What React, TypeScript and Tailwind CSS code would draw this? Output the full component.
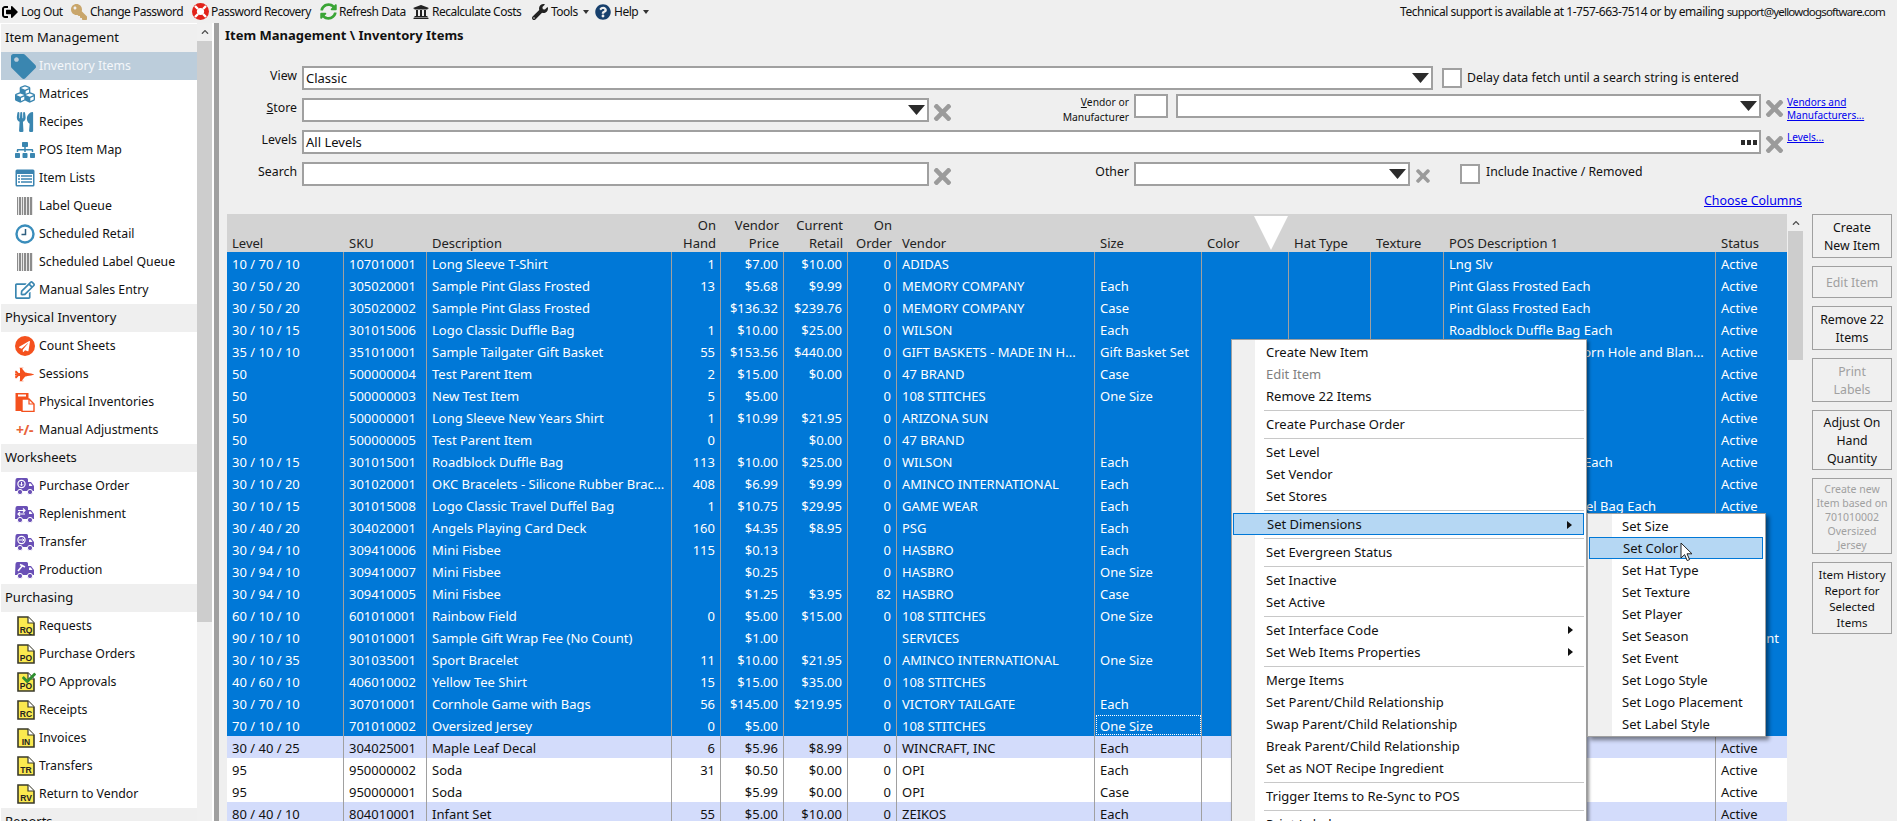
import type { ReactNode } from "react";
import {
  FaSignOutAlt,
  FaKey,
  FaSyncAlt,
  FaUniversity,
  FaWrench,
  FaQuestionCircle,
  FaTag,
  FaCubes,
  FaUtensils,
  FaSitemap,
  FaRegEdit,
  FaPaperPlane,
  FaFighterJet,
  FaTimes,
  FaCheck,
  FaChevronUp,
} from "react-icons/fa";

function LifeRing() {
  return (
    <svg width="17" height="17" viewBox="0 0 17 17">
      <circle cx="8.5" cy="8.5" r="8.5" fill="#e2231a" />
      <path d="M3 3l3 3M14 3l-3 3M3 14l3-3M14 14l-3-3" stroke="#fff" strokeWidth="2.4" />
      <circle cx="8.5" cy="8.5" r="3.6" fill="#fff" />
    </svg>
  );
}

function Barcode() {
  const bars = [0, 2, 3, 5, 7, 8, 10, 11, 13, 14];
  return (
    <svg width="16" height="20" viewBox="0 0 16 20" className="ml-[1px]">
      {bars.map((x) => (
        <rect key={x} x={x} y="1" width="1.2" height="18" fill="#8c8c8c" />
      ))}
    </svg>
  );
}

function Clock() {
  return (
    <svg width="20" height="20" viewBox="0 0 20 20">
      <circle cx="10" cy="10" r="8.5" fill="#fff" stroke="#3a8dbb" strokeWidth="2.4" />
      <path d="M10.5 5v5.5H6.5" fill="none" stroke="#2f5f7f" strokeWidth="1.5" />
    </svg>
  );
}

function ListWindow() {
  return (
    <svg width="20" height="18" viewBox="0 0 20 18">
      <rect x="0.5" y="0.5" width="19" height="17" rx="1.5" fill="#3b84b1" />
      <rect x="2" y="5" width="16" height="11" fill="#fff" />
      <path d="M3 7h2M6 7h11M3 10h2M6 10h11M3 13h2M6 13h11" stroke="#3b84b1" strokeWidth="1.6" />
    </svg>
  );
}

function Sheets() {
  return (
    <svg width="20" height="20" viewBox="0 0 20 20">
      <path d="M0.5 1h13v18h-13z" fill="#f4511e" />
      <path d="M3 2.5h8v2H3z" fill="#fff" />
      <path d="M7 7h7l5 5v7.5H7z" fill="#fff" stroke="#f4511e" strokeWidth="1.4" />
      <path d="M14 7v5h5" fill="none" stroke="#f4511e" strokeWidth="1.2" />
    </svg>
  );
}

function Truck({ children }: { children?: ReactNode }) {
  return (
    <svg width="20" height="20" viewBox="0 0 20 20">
      <path d="M0.5 4a2 2 0 0 1 2-2h9a1.5 1.5 0 0 1 1.5 1.5V6h3l3 4v5h-19z" fill="#6a50b6" />
      <path d="M14 7.5h1.8l1.7 2.5H14z" fill="#fff" />
      <circle cx="5" cy="16" r="2.6" fill="#6a50b6" stroke="#fff" strokeWidth="1" />
      <circle cx="15" cy="16" r="2.6" fill="#6a50b6" stroke="#fff" strokeWidth="1" />
      {children}
    </svg>
  );
}

function DocIcon({ code, check }: { code: string; check?: boolean }) {
  return (
    <div className="relative ml-[2px]">
      <svg width="18" height="20" viewBox="0 0 18 20">
        <path d="M1 1h10l6 6v12H1z" fill="#fbe94f" stroke="#3a3a2a" strokeWidth="1.6" />
        <path d="M11 1v6h6" fill="#fff" stroke="#3a3a2a" strokeWidth="1.2" />
        <text x="9" y="17" textAnchor="middle" fontSize="8.5" fontWeight="700" fontFamily="Liberation Sans, sans-serif" fill="#222">
          {code}
        </text>
      </svg>
      {check && <FaCheck className="absolute -top-[1px] left-[5px] text-[14px] text-[#2f8f2f]" />}
    </div>
  );
}

const sc = "text-[#3a86b0]";
const orange = "text-[#f4511e]";

const nav: { title: string; items: { label: string; icon: ReactNode; selected?: boolean }[] }[] = [
  {
    title: "Item Management",
    items: [
      { label: "Inventory Items", selected: true, icon: <FaTag className={`-ml-[2px] text-[25px] ${sc}`} /> },
      { label: "Matrices", icon: <FaCubes className={`text-[20px] ${sc}`} /> },
      { label: "Recipes", icon: <FaUtensils className={`text-[20px] ${sc}`} /> },
      { label: "POS Item Map", icon: <FaSitemap className={`text-[20px] ${sc}`} /> },
      { label: "Item Lists", icon: <ListWindow /> },
      { label: "Label Queue", icon: <Barcode /> },
      { label: "Scheduled Retail", icon: <Clock /> },
      { label: "Scheduled Label Queue", icon: <Barcode /> },
      { label: "Manual Sales Entry", icon: <FaRegEdit className={`text-[20px] ${sc}`} /> },
    ],
  },
  {
    title: "Physical Inventory",
    items: [
      {
        label: "Count Sheets",
        icon: (
          <span className="flex h-[20px] w-[20px] items-center justify-center rounded-full bg-[#f4511e]">
            <FaPaperPlane className="text-[11px] text-white" />
          </span>
        ),
      },
      { label: "Sessions", icon: <FaFighterJet className={`text-[19px] ${orange}`} /> },
      { label: "Physical Inventories", icon: <Sheets /> },
      {
        label: "Manual Adjustments",
        icon: <span className="text-[14px] font-bold leading-none tracking-[-0.5px] text-[#e8633a]">+/-</span>,
      },
    ],
  },
  {
    title: "Worksheets",
    items: [
      {
        label: "Purchase Order",
        icon: (
          <Truck>
            <circle cx="6.5" cy="8" r="3.6" fill="none" stroke="#fff" strokeWidth="1.2" />
            <path d="M6.5 6v3.5M5 8.3l1.5 1.5L8 8.3" fill="none" stroke="#fff" strokeWidth="1" />
          </Truck>
        ),
      },
      {
        label: "Replenishment",
        icon: (
          <Truck>
            <path d="M3 6.5h7M8 4.5l2 2-2 2M10 10H3M5 8l-2 2 2 2" fill="none" stroke="#fff" strokeWidth="1.2" />
          </Truck>
        ),
      },
      {
        label: "Transfer",
        icon: (
          <Truck>
            <circle cx="6.5" cy="8" r="3.6" fill="none" stroke="#fff" strokeWidth="1.2" />
            <path d="M4 8h5M7.5 6.5L9 8l-1.5 1.5" fill="none" stroke="#fff" strokeWidth="1" />
          </Truck>
        ),
      },
      {
        label: "Production",
        icon: (
          <Truck>
            <path d="M3 11l5-6M5 4.5l5 2.5" fill="none" stroke="#fff" strokeWidth="1.6" />
          </Truck>
        ),
      },
    ],
  },
  {
    title: "Purchasing",
    items: [
      { label: "Requests", icon: <DocIcon code="RQ" /> },
      { label: "Purchase Orders", icon: <DocIcon code="PO" /> },
      { label: "PO Approvals", icon: <DocIcon code="PO" check /> },
      { label: "Receipts", icon: <DocIcon code="RC" /> },
      { label: "Invoices", icon: <DocIcon code="IN" /> },
      { label: "Transfers", icon: <DocIcon code="TR" /> },
      { label: "Return to Vendor", icon: <DocIcon code="RV" /> },
    ],
  },
  { title: "Reports", items: [] },
];

const columns = [
  "w-[117px] pl-[5px]",
  "w-[83px] pl-[5px]",
  "w-[245px] pl-[5px]",
  "w-[49px] pr-[5px] text-right",
  "w-[63px] pr-[5px] text-right",
  "w-[64px] pr-[5px] text-right",
  "w-[49px] pr-[5px] text-right",
  "w-[198px] pl-[5px]",
  "w-[107px] pl-[5px]",
  "w-[87px] pl-[5px]",
  "w-[82px] pl-[5px]",
  "w-[73px] pl-[5px]",
  "w-[272px] pl-[5px]",
  "w-[71px] pl-[5px]",
];

const headers: [string, string?][] = [
  ["Level"],
  ["SKU"],
  ["Description"],
  ["On", "Hand"],
  ["Vendor", "Price"],
  ["Current", "Retail"],
  ["On", "Order"],
  ["Vendor"],
  ["Size"],
  ["Color"],
  ["Hat Type"],
  ["Texture"],
  ["POS Description 1"],
  ["Status"],
];

// level, sku, description, on hand, price, retail, on order, vendor, size, pos description, status
const rows: string[][] = [
  ["10 / 70 / 10", "107010001", "Long Sleeve T-Shirt", "1", "$7.00", "$10.00", "0", "ADIDAS", "", "Lng Slv", "Active"],
  ["30 / 50 / 20", "305020001", "Sample Pint Glass Frosted", "13", "$5.68", "$9.99", "0", "MEMORY COMPANY", "Each", "Pint Glass Frosted Each", "Active"],
  ["30 / 50 / 20", "305020002", "Sample Pint Glass Frosted", "", "$136.32", "$239.76", "0", "MEMORY COMPANY", "Case", "Pint Glass Frosted Each", "Active"],
  ["30 / 10 / 15", "301015006", "Logo Classic Duffle Bag", "1", "$10.00", "$25.00", "0", "WILSON", "Each", "Roadblock Duffle Bag Each", "Active"],
  ["35 / 10 / 10", "351010001", "Sample Tailgater Gift Basket", "55", "$153.56", "$440.00", "0", "GIFT BASKETS - MADE IN H...", "Gift Basket Set", "Tailgater Gift Basket Corn Hole and Blan...", "Active"],
  ["50", "500000004", "Test Parent Item", "2", "$15.00", "$0.00", "0", "47 BRAND", "Case", "", "Active"],
  ["50", "500000003", "New Test Item", "5", "$5.00", "", "0", "108 STITCHES", "One Size", "", "Active"],
  ["50", "500000001", "Long Sleeve New Years Shirt", "1", "$10.99", "$21.95", "0", "ARIZONA SUN", "", "", "Active"],
  ["50", "500000005", "Test Parent Item", "0", "", "$0.00", "0", "47 BRAND", "", "", "Active"],
  ["30 / 10 / 15", "301015001", "Roadblock Duffle Bag", "113", "$10.00", "$25.00", "0", "WILSON", "Each", "Roadblock Duffle Bg - Each", "Active"],
  ["30 / 10 / 20", "301020001", "OKC Bracelets - Silicone Rubber Brac...", "408", "$6.99", "$9.99", "0", "AMINCO INTERNATIONAL", "Each", "", "Active"],
  ["30 / 10 / 15", "301015008", "Logo Classic Travel Duffel Bag", "1", "$10.75", "$29.95", "0", "GAME WEAR", "Each", "Logo Classic Travl Duffel Bag Each", "Active"],
  ["30 / 40 / 20", "304020001", "Angels Playing Card Deck", "160", "$4.35", "$8.95", "0", "PSG", "Each", "", "Active"],
  ["30 / 94 / 10", "309410006", "Mini Fisbee", "115", "$0.13", "", "0", "HASBRO", "Each", "", "Active"],
  ["30 / 94 / 10", "309410007", "Mini Fisbee", "", "$0.25", "", "0", "HASBRO", "One Size", "", "Active"],
  ["30 / 94 / 10", "309410005", "Mini Fisbee", "", "$1.25", "$3.95", "82", "HASBRO", "Case", "", "Active"],
  ["60 / 10 / 10", "601010001", "Rainbow Field", "0", "$5.00", "$15.00", "0", "108 STITCHES", "One Size", "", "Active"],
  ["90 / 10 / 10", "901010001", "Sample Gift Wrap Fee (No Count)", "", "$1.00", "", "", "SERVICES", "", "", "No Count"],
  ["30 / 10 / 35", "301035001", "Sport Bracelet", "11", "$10.00", "$21.95", "0", "AMINCO INTERNATIONAL", "One Size", "", "Active"],
  ["40 / 60 / 10", "406010002", "Yellow Tee Shirt", "15", "$15.00", "$35.00", "0", "108 STITCHES", "", "", "Active"],
  ["30 / 70 / 10", "307010001", "Cornhole Game with Bags", "56", "$145.00", "$219.95", "0", "VICTORY TAILGATE", "Each", "", "Active"],
  ["70 / 10 / 10", "701010002", "Oversized Jersey", "0", "$5.00", "", "0", "108 STITCHES", "One Size", "", "Active"],
  ["30 / 40 / 25", "304025001", "Maple Leaf Decal", "6", "$5.96", "$8.99", "0", "WINCRAFT, INC", "Each", "", "Active"],
  ["95", "950000002", "Soda", "31", "$0.50", "$0.00", "0", "OPI", "Each", "", "Active"],
  ["95", "950000001", "Soda", "", "$5.99", "$0.00", "0", "OPI", "Case", "", "Active"],
  ["80 / 40 / 10", "804010001", "Infant Set", "55", "$5.00", "$10.00", "0", "ZEIKOS", "Each", "", "Active"],
];

const mainMenu: (string | { label: string; disabled?: boolean; arrow?: boolean; active?: boolean })[][] = [
  ["Create New Item", { label: "Edit Item", disabled: true }, "Remove 22 Items"],
  ["Create Purchase Order"],
  ["Set Level", "Set Vendor", "Set Stores"],
  [{ label: "Set Dimensions", arrow: true, active: true }],
  ["Set Evergreen Status"],
  ["Set Inactive", "Set Active"],
  [{ label: "Set Interface Code", arrow: true }, { label: "Set Web Items Properties", arrow: true }],
  ["Merge Items", "Set Parent/Child Relationship", "Swap Parent/Child Relationship", "Break Parent/Child Relationship", "Set as NOT Recipe Ingredient"],
  ["Trigger Items to Re-Sync to POS"],
  ["Print Labels"],
];

const subMenu = ["Set Size", "Set Color", "Set Hat Type", "Set Texture", "Set Player", "Set Season", "Set Event", "Set Logo Style", "Set Logo Placement", "Set Label Style"];

const sideButtons: { lines: string[]; disabled?: boolean; h: string; text: string }[] = [
  { lines: ["Create", "New Item"], h: "h-[44px]", text: "text-[12.3px] leading-[18px]" },
  { lines: ["Edit Item"], disabled: true, h: "h-[32px]", text: "text-[12.3px] leading-[18px]" },
  { lines: ["Remove 22", "Items"], h: "h-[44px]", text: "text-[12.3px] leading-[18px]" },
  { lines: ["Print", "Labels"], disabled: true, h: "h-[44px]", text: "text-[12.3px] leading-[18px]" },
  { lines: ["Adjust On", "Hand", "Quantity"], h: "h-[60px]", text: "text-[12.3px] leading-[18px]" },
  { lines: ["Create new", "Item based on", "701010002", "Oversized", "Jersey"], disabled: true, h: "h-[76px]", text: "text-[10.5px] leading-[14px]" },
  { lines: ["Item History", "Report for", "Selected", "Items"], h: "h-[72px]", text: "text-[11.5px] leading-[16px]" },
];

function Caret() {
  return (
    <svg width="17" height="10" viewBox="0 0 17 10" className="shrink-0">
      <path d="M0 0h17l-8.5 10z" fill="#2b2b2b" />
    </svg>
  );
}

function Dots() {
  return (
    <svg width="16" height="5" viewBox="0 0 16 5" className="shrink-0">
      <path d="M0 0h4v5H0zM6 0h4v5H6zM12 0h4v5h-4z" fill="#2b2b2b" />
    </svg>
  );
}

function Clear({ small }: { small?: boolean }) {
  return <FaTimes className={small ? "shrink-0 text-[20px] text-[#9b9b9b]" : "shrink-0 text-[25px] text-[#9b9b9b]"} />;
}

function Field({ w, value, right }: { w: string; value?: string; right?: ReactNode }) {
  return (
    <div className={`flex h-[24px] shrink-0 items-center justify-between border-2 border-[#a0a0a0] bg-white pl-[2px] pr-[2px] ${w}`}>
      <span className="pt-[1px]">{value}</span>
      {right}
    </div>
  );
}

function Label({ children }: { children: ReactNode }) {
  return <div className="w-[79px] shrink-0 self-start pt-[5px] pr-[1px] text-right text-[12.3px] leading-[18px]">{children}</div>;
}

function Check() {
  return <div className="h-[20px] w-[20px] shrink-0 border-2 border-[#a0a0a0] bg-white" />;
}

function MenuArrow() {
  return (
    <svg width="5" height="8" viewBox="0 0 5 8" className="absolute right-[11px] top-[7px]">
      <path d="M0 0l5 4-5 4z" fill="#111" />
    </svg>
  );
}

function Sidebar() {
  return (
    <div className="flex w-[214px] shrink-0 overflow-hidden bg-white">
      <div className="w-[197px] shrink-0 pl-[1px] pt-[1px]">
        {nav.map((s) => (
          <div key={s.title}>
            <div className="flex h-[28px] items-center bg-[#efefef] pl-[4px]">{s.title}</div>
            {s.items.map((it) => (
              <div key={it.label} className={it.selected ? "flex h-[28px] items-center bg-[#bccddb] text-[#f4f7fa]" : "flex h-[28px] items-center"}>
                <div className="flex w-[38px] shrink-0 justify-center pl-[9px]">{it.icon}</div>
                <span className="pt-[1px] text-[12.3px]">{it.label}</span>
              </div>
            ))}
          </div>
        ))}
      </div>
      <div className="flex w-[15px] shrink-0 flex-col bg-[#f0f0f0]">
        <div className="flex h-[18px] items-center justify-center">
          <FaChevronUp className="text-[8px] text-[#505050]" />
        </div>
        <div className="h-[581px] bg-[#cdcdcd]" />
      </div>
    </div>
  );
}

function Toolbar() {
  const items: { label: string; icon: ReactNode; caret?: boolean; w: string }[] = [
    { label: "Log Out", icon: <FaSignOutAlt className="text-[16px] text-black" />, w: "w-[69px]" },
    { label: "Change Password", icon: <FaKey className="-scale-x-100 text-[16px] text-[#c9a66b]" />, w: "w-[121px]" },
    { label: "Password Recovery", icon: <LifeRing />, w: "w-[128px]" },
    { label: "Refresh Data", icon: <FaSyncAlt className="text-[17px] text-[#3aa535]" />, w: "w-[93px]" },
    { label: "Recalculate Costs", icon: <FaUniversity className="text-[16px] text-[#222]" />, w: "w-[119px]" },
    { label: "Tools", icon: <FaWrench className="text-[16px] text-[#222]" />, caret: true, w: "w-[63px]" },
    { label: "Help", icon: <FaQuestionCircle className="text-[16px] text-[#17406d]" />, caret: true, w: "w-[60px]" },
  ];
  return (
    <div className="flex h-[23px] shrink-0 items-center overflow-hidden">
      <div className="flex w-[1400px] shrink-0 items-center pl-[2px]">
        {items.map((i) => (
          <div key={i.label} className={`flex shrink-0 items-center ${i.w}`}>
            <div className="w-[19px] shrink-0">{i.icon}</div>
            <span className="whitespace-nowrap text-[12px] tracking-[-0.5px]">{i.label}</span>
            {i.caret && (
              <svg width="6" height="4" viewBox="0 0 6 4" className="ml-[5px] shrink-0">
                <path d="M0 0h6L3 4z" fill="#333" />
              </svg>
            )}
          </div>
        ))}
      </div>
      <span className="shrink-0 whitespace-nowrap text-[12px] tracking-[-0.45px]">
        Technical support is available at 1-757-663-7514 or by emailing{" "}
        <span className="text-[11.5px] tracking-[-0.8px]">support@yellowdogsoftware.com</span>
      </span>
    </div>
  );
}

function Filters() {
  return (
    <div className="flex h-[128px] shrink-0 flex-col">
      <div className="flex h-[32px] items-center">
        <Label>View</Label>
        <div className="ml-[4px]">
          <Field w="w-[1131px]" value="Classic" right={<Caret />} />
        </div>
        <div className="ml-[9px]">
          <Check />
        </div>
        <span className="ml-[5px] text-[12.3px]">Delay data fetch until a search string is entered</span>
      </div>
      <div className="flex h-[32px] items-center">
        <Label>
          <span className="underline">S</span>tore
        </Label>
        <div className="ml-[4px]">
          <Field w="w-[627px]" right={<Caret />} />
        </div>
        <div className="flex w-[26px] justify-center pt-[4px]">
          <Clear />
        </div>
        <div className="w-[174px] shrink-0 self-start pt-[1px] text-right text-[10.3px] leading-[15px]">
          <span className="underline">V</span>endor or
          <br />
          Manufacturer
        </div>
        <div className="ml-[5px] self-start">
          <Field w="w-[34px]" />
        </div>
        <div className="ml-[8px] self-start">
          <Field w="w-[585px]" right={<Caret />} />
        </div>
        <div className="flex w-[26px] justify-center pb-[4px]">
          <Clear />
        </div>
        <a className="self-start pt-[2px] text-[10px] leading-[13px] text-[#0000ee] underline">
          Vendors and
          <br />
          Manufacturers...
        </a>
      </div>
      <div className="flex h-[32px] items-center">
        <Label>Levels</Label>
        <div className="ml-[4px]">
          <Field w="w-[1459px]" value="All Levels" right={<Dots />} />
        </div>
        <div className="flex w-[26px] justify-center pt-[4px]">
          <Clear />
        </div>
        <a className="self-start pt-[5px] text-[10px] leading-[13px] text-[#0000ee] underline">Levels...</a>
      </div>
      <div className="flex h-[32px] items-center">
        <Label>Search</Label>
        <div className="ml-[4px]">
          <Field w="w-[627px]" />
        </div>
        <div className="flex w-[26px] justify-center pt-[4px]">
          <Clear />
        </div>
        <div className="w-[174px] shrink-0 self-start pt-[5px] text-right text-[12.3px] leading-[18px]">Other</div>
        <div className="ml-[5px]">
          <Field w="w-[276px]" right={<Caret />} />
        </div>
        <div className="flex w-[26px] justify-center pt-[4px]">
          <Clear small />
        </div>
        <div className="ml-[24px]">
          <Check />
        </div>
        <span className="ml-[6px] pb-[3px] text-[12.3px]">Include Inactive / Removed</span>
      </div>
    </div>
  );
}

function Grid() {
  return (
    <div className="relative w-[1560px] shrink-0 overflow-hidden">
      <div className="flex h-[38px] items-end bg-[#d3d3d3] leading-[18px] text-[#222]">
        {headers.map((h, i) => (
          <div key={i} className={`shrink-0 ${columns[i]}`}>
            {h[1] ? (
              <>
                {h[0]}
                <br />
                {h[1]}
              </>
            ) : (
              h[0]
            )}
          </div>
        ))}
      </div>
      <svg width="36" height="36" viewBox="0 0 36 36" className="absolute left-[1026px] top-[1px]">
        <path d="M1 1h34L18 35z" fill="#fff" />
      </svg>
      {rows.map((r, idx) => {
        const selected = idx < 22;
        const tone = selected ? "bg-[#0078d7] text-white" : idx === 22 || idx === 25 ? "bg-[#d3dcfb]" : "bg-white";
        const cells = [...r.slice(0, 9), "", "", "", r[9], r[10]];
        return (
          <div key={idx} className={`flex h-[22px] leading-[22px] ${tone}`}>
            {cells.map((c, i) => (
              <div
                key={i}
                className={`shrink-0 overflow-hidden whitespace-nowrap border-r border-[#a0a0a0] pt-[1px] ${columns[i]} ${
                  idx === 21 && i === 8 ? "outline outline-1 -outline-offset-2 outline-dotted outline-white" : ""
                } ${i === 13 ? "border-r-0" : ""}`}
              >
                {c}
              </div>
            ))}
          </div>
        );
      })}
    </div>
  );
}

function GridScroll() {
  return (
    <div className="ml-[1px] flex w-[15px] shrink-0 flex-col">
      <div className="flex h-[17px] items-center justify-center">
        <FaChevronUp className="text-[8px] text-[#505050]" />
      </div>
      <div className="h-[129px] bg-[#cdcdcd]" />
    </div>
  );
}

function SideButtons() {
  return (
    <div className="ml-[9px] flex w-[80px] shrink-0 flex-col gap-[8px]">
      {sideButtons.map((b) => (
        <div
          key={b.lines.join()}
          className={`flex shrink-0 flex-col items-center justify-center border border-[#a0a0a0] bg-[#f0f0f0] pt-[1px] text-center ${b.h} ${b.text} ${
            b.disabled ? "text-[#a0a0a0]" : ""
          }`}
        >
          {b.lines.map((l) => (
            <span key={l}>{l}</span>
          ))}
        </div>
      ))}
    </div>
  );
}

function ContextMenus() {
  return (
    <>
      <div className="absolute left-[1231px] top-[339px] w-[356px] border border-[#a0a0a0] bg-[linear-gradient(90deg,#f0f0f0_23px,#ffffff_23px)] py-[1px] pl-[1px] pr-[2px] shadow-[2px_2px_3px_rgba(0,0,0,0.45)]">
        {mainMenu.map((group, gi) => (
          <div key={gi}>
            {gi > 0 && (
              <div className="flex h-[6px] items-center pl-[31px]">
                <div className="h-[1px] w-full bg-[#c8c8c8]" />
              </div>
            )}
            {group.map((entry) => {
              const it = typeof entry === "string" ? { label: entry } : entry;
              return (
                <div
                  key={it.label}
                  className={`relative flex h-[22px] items-center pl-[33px] pt-[1px] ${
                    it.active ? "border border-[#0078d7] bg-[#b5d7f3] pl-[32px]" : ""
                  } ${it.disabled ? "text-[#808080]" : ""}`}
                >
                  {it.label}
                  {it.arrow && <MenuArrow />}
                </div>
              );
            })}
          </div>
        ))}
      </div>
      <div className="absolute left-[1587px] top-[513px] w-[179px] border border-[#a0a0a0] bg-[linear-gradient(90deg,#f0f0f0_24px,#ffffff_24px)] py-[1px] pl-[1px] pr-[2px] shadow-[3px_3px_4px_rgba(0,0,0,0.45)]">
        {subMenu.map((s, i) => (
          <div
            key={s}
            className={`flex h-[22px] items-center pl-[33px] pt-[1px] ${i === 1 ? "border border-[#0078d7] bg-[#b5d7f3] pl-[32px]" : ""}`}
          >
            {s}
          </div>
        ))}
      </div>
      <svg width="13" height="20" viewBox="0 0 13 20" className="absolute left-[1680px] top-[542px]">
        <path d="M1 1v15l3.6-3.4 2.6 6 2.4-1-2.6-5.8H12z" fill="#fff" stroke="#222" strokeWidth="1" />
      </svg>
    </>
  );
}

export default function App() {
  return (
    <div className="relative flex h-[821px] w-[1897px] flex-col overflow-hidden bg-[#efefef] font-['Noto_Sans','Open_Sans',sans-serif] text-[13px] text-[#111]">
      <Toolbar />
      <div className="flex min-h-0 flex-1">
        <Sidebar />
        <div className="w-[5px] shrink-0 bg-[#a0a0a0]" />
        <div className="flex min-w-0 flex-1 flex-col">
          <div className="h-[39px] shrink-0 pl-[6px] pt-[3px] font-bold leading-[18px]">Item Management \ Inventory Items</div>
          <Filters />
          <div className="flex h-[24px] shrink-0 items-center justify-end pb-[1px] pr-[95px]">
            <a className="text-[12.4px] text-[#0000ee] underline">Choose Columns</a>
          </div>
          <div className="flex min-h-0 flex-1 pl-[8px]">
            <Grid />
            <GridScroll />
            <SideButtons />
          </div>
        </div>
      </div>
      <ContextMenus />
    </div>
  );
}
